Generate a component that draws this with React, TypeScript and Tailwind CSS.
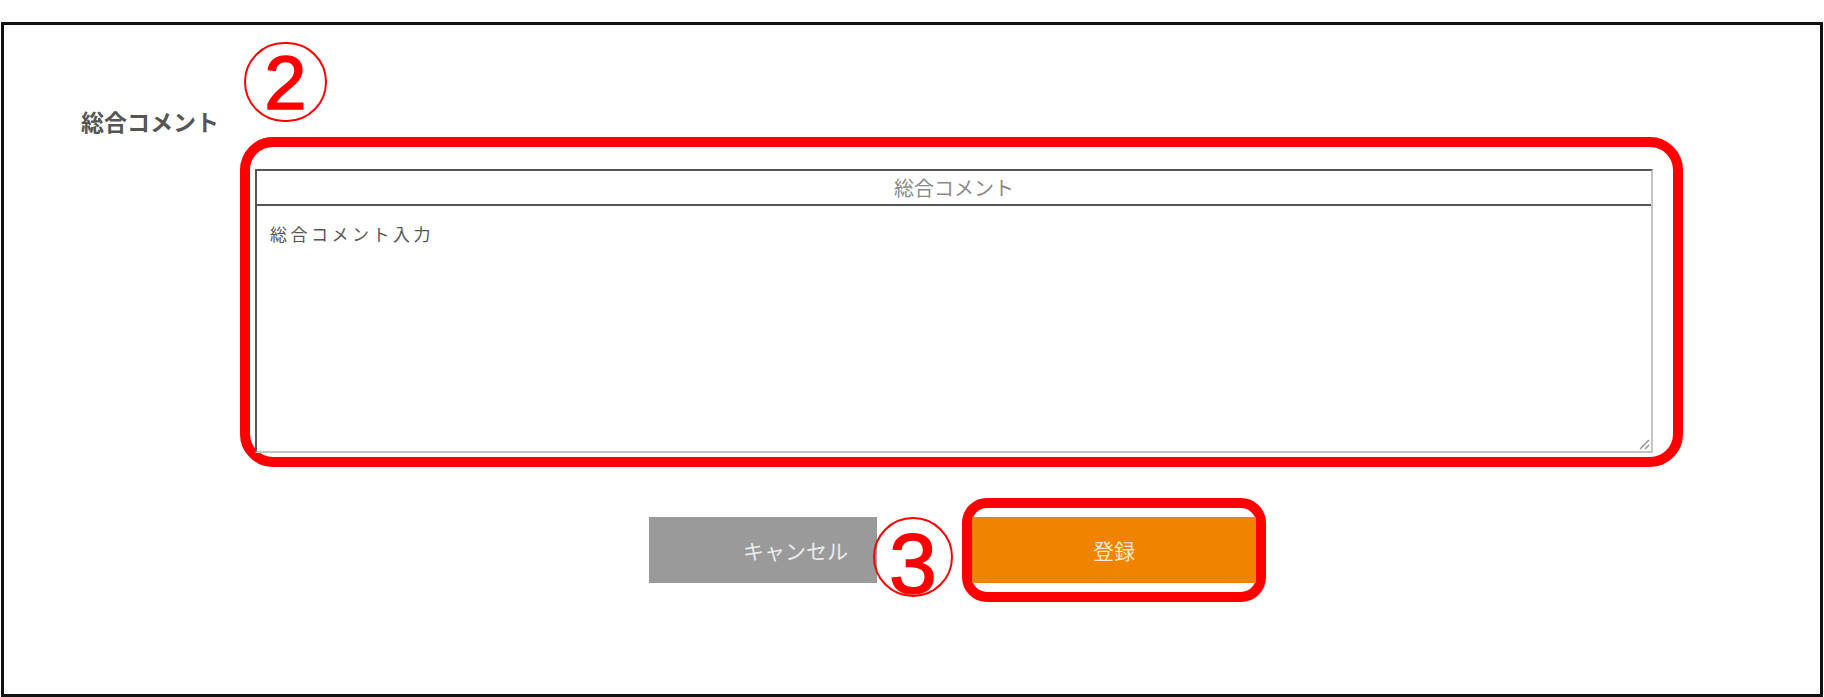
import clsx from "clsx";

function Circled(props: { n: string; className?: string; digitClassName?: string }) {
    return (
        <div
            className={clsx(
                "flex items-center justify-center rounded-full border-2 border-[#ff0000] text-[#ff0000] font-['Liberation_Sans',Arial,sans-serif] font-normal leading-none [-webkit-text-stroke:1.5px_#ff0000]",
                props.className
            )}
        >
            <span className={props.digitClassName}>{props.n}</span>
        </div>
    );
}

function ResizeGrip() {
    return (
        <svg className="absolute right-[1px] bottom-[1px]" width="12" height="12" viewBox="0 0 12 12">
            <line x1="2" y1="11" x2="11" y2="2" stroke="#8a8a8a" strokeWidth="1.2" />
            <line x1="7" y1="11" x2="11" y2="7" stroke="#8a8a8a" strokeWidth="1.2" />
        </svg>
    );
}

function CommentBox() {
    return (
        <div className="relative w-[1398px] h-[284px] border-2 border-t-[#555] border-l-[#555] border-r-[#c4c4c4] border-b-[#c4c4c4] bg-white">
            <div className="h-[35px] border-b-2 border-[#555] flex items-center justify-center text-[20px] text-[#8a8a8a] leading-none">
                総合コメント
            </div>
            <div className="pl-[13px] pt-[16px] text-[17px] tracking-[3.5px] text-[#555] leading-[24px]">
                総合コメント入力
            </div>
            <ResizeGrip />
        </div>
    );
}

export default function App() {
    return (
        <main className="w-[1824px] h-[697px] bg-white pt-[22px] pl-[1px] font-['Noto_Sans_CJK_JP',sans-serif]">
            <div className="w-[1822px] h-[675px] border-[3px] border-[#111]">
                <div className="flex">
                    <div className="w-[236px] pl-[77px] pt-[80px]">
                        <div className="text-[23px] leading-[32px] font-bold text-[#555]">総合コメント</div>
                    </div>
                    <div className="pt-[17px]">
                        <Circled n="2" className="ml-[4px] w-[83px] h-[80px]" digitClassName="text-[76px] translate-y-[1px]" />
                        <div className="mt-[15px] w-[1443px] rounded-[33px] border-[10px] border-[#ff0000] pt-[22px] pb-[4px] pl-[5px] pr-[20px]">
                            <CommentBox />
                        </div>
                    </div>
                </div>

                <div className="flex items-start mt-[31px] pl-[645px]">
                    <button className="mt-[19px] w-[228px] h-[66px] bg-[#9a9a9a] pl-[94px] text-left text-[21px] text-[#ececec] leading-none">
                        キャンセル
                    </button>
                    <Circled
                        n="3"
                        className="relative -ml-[4px] mt-[19px] w-[80px] h-[80px]"
                        digitClassName="text-[86px] translate-y-[6px]"
                    />
                    <div className="ml-[9px] w-[304px] h-[104px] rounded-[25px] border-[10px] border-[#ff0000] py-[9px]">
                        <button className="w-full h-[66px] bg-[#f08300] text-[21px] text-[#fde8cf] leading-none">
                            登録
                        </button>
                    </div>
                </div>
            </div>
        </main>
    );
}
